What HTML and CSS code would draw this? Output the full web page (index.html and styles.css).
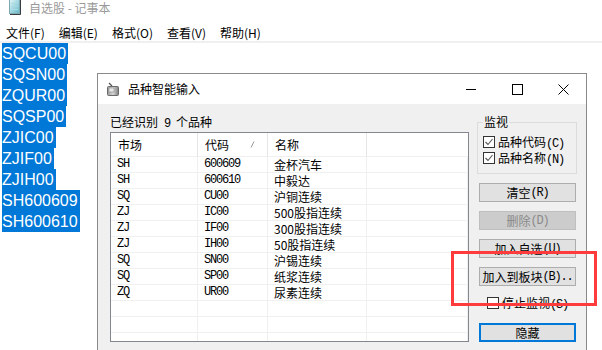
FILE: index.html
```html
<!DOCTYPE html>
<html lang="zh-CN">
<head>
<meta charset="utf-8">
<title>自选股 - 记事本</title>
<link rel="stylesheet" href="styles.css">
</head>
<body>
<div class="notepad">
  <div class="np-title">
    <svg class="np-icon" width="16" height="16" viewBox="0 0 16 16">
      <defs>
        <linearGradient id="nb" x1="0" y1="0" x2="1" y2="1">
          <stop offset="0" stop-color="#e4f6f8"/>
          <stop offset="1" stop-color="#62b7c8"/>
        </linearGradient>
      </defs>
      <rect x="2.5" y="0.5" width="10" height="14" fill="url(#nb)" stroke="#7fa9b4"/>
      <path d="M13.5 1 V15.5 H3" stroke="#3c3c3c" fill="none"/>
      <path d="M4 4.5 H11 M4 7.5 H11 M4 10.5 H11" stroke="#a9dbe4"/>
    </svg>
    <span class="np-caption">自选股 - 记事本</span>
  </div>
  <div class="np-menu">
    <span>文件(F)</span><span>编辑(E)</span><span>格式(O)</span><span>查看(V)</span><span>帮助(H)</span>
  </div>
  <div class="np-text">
    <div class="line"><span>SQCU00</span></div>
    <div class="line"><span>SQSN00</span></div>
    <div class="line"><span>ZQUR00</span></div>
    <div class="line"><span>SQSP00</span></div>
    <div class="line"><span>ZJIC00</span></div>
    <div class="line"><span>ZJIF00</span></div>
    <div class="line"><span>ZJIH00</span></div>
    <div class="line"><span>SH600609</span></div>
    <div class="line"><span>SH600610</span></div>
  </div>
</div>

<div class="dialog">
  <div class="dlg-title">
    <svg class="dlg-icon" width="12" height="14" viewBox="0 0 12 14">
      <defs>
        <linearGradient id="gi" x1="0" y1="0" x2="1" y2="0">
          <stop offset="0" stop-color="#9a9a9a"/>
          <stop offset="0.5" stop-color="#d8d8d8"/>
          <stop offset="1" stop-color="#7c7c7c"/>
        </linearGradient>
      </defs>
      <path d="M2 1 L5 4" stroke="#555" stroke-width="1.2"/>
      <rect x="0.5" y="4.5" width="11" height="9" rx="1" fill="url(#gi)" stroke="#6a6a6a"/>
      <rect x="2" y="6" width="5" height="4" fill="#e8e8e8" stroke="#8a8a8a" stroke-width="0.6"/>
    </svg>
    <span class="dlg-caption">品种智能输入</span>
    <div class="win-ctrls">
      <span class="wc"><svg width="10" height="10" viewBox="0 0 10 10"><path d="M0 5.5 H10" stroke="#000"/></svg></span>
      <span class="wc"><svg width="11" height="11" viewBox="0 0 11 11"><rect x="0.5" y="0.5" width="10" height="10" fill="none" stroke="#000"/></svg></span>
      <span class="wc"><svg width="11" height="11" viewBox="0 0 11 11"><path d="M0.5 0.5 L10.5 10.5 M10.5 0.5 L0.5 10.5" stroke="#000"/></svg></span>
    </div>
  </div>
  <div class="dlg-body">
    <div class="left">
      <div class="count">已经识别<span class="a"> 9 </span>个品种</div>
      <div class="listview">
        <div class="lv-grid">
          <div class="hc">市场</div>
          <div class="hc">代码<svg class="sort" width="5" height="7" viewBox="0 0 5 7"><path d="M1 6.5 L4 0.5" stroke="#9a9a9a"/></svg></div>
          <div class="hc">名称</div>
          <div class="hc hc-last"></div>

          <div class="c a">SH</div><div class="c a">600609</div><div class="c">金杯汽车</div><div class="c"></div>
          <div class="c a">SH</div><div class="c a">600610</div><div class="c">中毅达</div><div class="c"></div>
          <div class="c a">SQ</div><div class="c a">CU00</div><div class="c">沪铜连续</div><div class="c"></div>
          <div class="c a">ZJ</div><div class="c a">IC00</div><div class="c">500股指连续</div><div class="c"></div>
          <div class="c a">ZJ</div><div class="c a">IF00</div><div class="c">300股指连续</div><div class="c"></div>
          <div class="c a">ZJ</div><div class="c a">IH00</div><div class="c">50股指连续</div><div class="c"></div>
          <div class="c a">SQ</div><div class="c a">SN00</div><div class="c">沪锡连续</div><div class="c"></div>
          <div class="c a">SQ</div><div class="c a">SP00</div><div class="c">纸浆连续</div><div class="c"></div>
          <div class="c a">ZQ</div><div class="c a">UR00</div><div class="c">尿素连续</div><div class="c"></div>
          <div class="c"></div><div class="c"></div><div class="c"></div><div class="c"></div>
          <div class="c"></div><div class="c"></div><div class="c"></div><div class="c"></div>
          <div class="c"></div><div class="c"></div><div class="c"></div><div class="c"></div>
        </div>
      </div>
    </div>
    <div class="right">
      <fieldset class="group">
        <legend>监视</legend>
        <div class="chk">
          <svg width="12" height="12" viewBox="0 0 12 12"><rect x="0.5" y="0.5" width="11" height="11" fill="#fff" stroke="#333"/><path d="M2.5 6 L5 8.5 L9.5 3" fill="none" stroke="#555" stroke-width="1.1"/></svg>
          <span>品种代码<span class="a">(C)</span></span>
        </div>
        <div class="chk">
          <svg width="12" height="12" viewBox="0 0 12 12"><rect x="0.5" y="0.5" width="11" height="11" fill="#fff" stroke="#333"/><path d="M2.5 6 L5 8.5 L9.5 3" fill="none" stroke="#555" stroke-width="1.1"/></svg>
          <span>品种名称<span class="a">(N)</span></span>
        </div>
      </fieldset>
      <div class="buttons">
        <div class="btn">清空<span class="a">(R)</span></div>
        <div class="btn btn-disabled">删除<span class="a">(D)</span></div>
        <div class="btn">加入自选<span class="a">(U)</span></div>
        <div class="btn">加入到板块<span class="a">(B)..</span></div>
      </div>
      <div class="chk chk-stop">
        <svg width="12" height="12" viewBox="0 0 12 12"><rect x="0.5" y="0.5" width="11" height="11" fill="#fff" stroke="#333"/></svg>
        <span>停止监视<span class="a">(S)</span></span>
      </div>
      <div class="btn btn-default">隐藏</div>
    </div>
  </div>
</div>

<div class="annot"></div>
</body>
</html>
```

FILE: styles.css
```css
* { box-sizing: border-box; }

html, body {
  margin: 0;
  padding: 0;
}

body {
  width: 602px;
  height: 350px;
  overflow: hidden;
  position: relative;
  background: #ffffff;
  font-family: "Noto Sans CJK SC", "Liberation Sans", sans-serif;
  color: #000;
}

/* ---------- Notepad ---------- */
.notepad {
  height: 350px;
  overflow: hidden;
}

.np-title {
  height: 24px;
  display: flex;
  align-items: flex-start;
  padding-left: 7px;
}

.np-icon {
  margin-top: -1px;
  flex: none;
}

.np-caption {
  margin-left: 6px;
  font-size: 12px;
  line-height: 15px;
  color: #9a9a9a;
}

.np-menu {
  height: 19px;
  display: flex;
  font-size: 12px;
  line-height: 17px;
  border-bottom: 2px solid #f0f0f0;
}

.np-menu span {
  padding: 0 8px 0 6px;
}

.np-text {
  padding-left: 2px;
  font-family: "Liberation Sans", sans-serif;
  font-size: 16px;
  line-height: 21px;
}

.line {
  height: 21px;
}

.line span {
  display: inline-block;
  height: 21px;
  padding-right: 2px;
  background: #0078d7;
  color: #fff;
}

/* ---------- Dialog ---------- */
.dialog {
  position: absolute;
  left: 97px;
  top: 73px;
  width: 490px;
  height: 277px;
  border: 1px solid #8a8a8a;
  border-bottom: none;
  background: #f0f0f0;
  font-size: 12px;
  overflow: hidden;
}

.dlg-title {
  height: 30px;
  background: #fff;
  display: flex;
  align-items: center;
  padding-left: 9px;
}

.dlg-icon {
  flex: none;
}

.dlg-caption {
  margin-left: 9px;
  font-size: 12px;
  line-height: 16px;
}

.win-ctrls {
  margin-left: auto;
  display: flex;
  height: 30px;
}

.wc {
  width: 46px;
  height: 30px;
  display: flex;
  align-items: center;
  justify-content: center;
}

.dlg-body {
  display: flex;
  padding: 10px 0 0 12px;
}

.a {
  font-family: "Liberation Mono", monospace;
  font-size: 12px;
  letter-spacing: -1.2px;
}

.left {
  width: 359px;
  flex: none;
}

.count {
  height: 18px;
  line-height: 16px;
}

.listview {
  width: 359px;
  height: 210px;
  border: 1px solid #828790;
  background: #fff;
  overflow: hidden;
}

.lv-grid {
  display: grid;
  grid-template-columns: 87px 70px 99px 1fr;
  grid-template-rows: 24px;
  grid-auto-rows: 16px;
}

.hc {
  height: 24px;
  padding-left: 7px;
  border-right: 1px solid #e5e5e5;
  border-bottom: 1px solid #f0f0f0;
  display: flex;
  align-items: center;
}

.hc-last {
  border-right: none;
}

.sort {
  margin-left: auto;
  margin-right: 12px;
}

.c {
  height: 16px;
  line-height: 15px;
  padding-left: 6px;
  border-right: 1px solid #f0f0f0;
  border-bottom: 1px solid #f0f0f0;
  white-space: nowrap;
  overflow: hidden;
}

.c.a {
  color: #000;
}

/* ---------- Right column ---------- */
.right {
  margin-left: 8px;
  width: 100px;
  display: flex;
  flex-direction: column;
}

.group {
  margin: 0;
  padding: 0 0 0 5px;
  width: 100px;
  height: 60px;
  border: 1px solid #dcdcdc;
}

.group legend {
  padding: 0 1px;
  line-height: 16px;
}

.chk {
  display: flex;
  align-items: center;
  height: 16px;
  gap: 3px;
  white-space: nowrap;
}

.group .chk:first-of-type {
  margin-top: 4px;
}

.buttons {
  display: flex;
  flex-direction: column;
  gap: 9px;
  margin-top: 9px;
}

.btn {
  margin-left: 2px;
  width: 97px;
  height: 19px;
  background: #e1e1e1;
  border: 1px solid #adadad;
  display: flex;
  align-items: center;
  justify-content: center;
  white-space: nowrap;
  line-height: 16px;
}

.btn-disabled {
  background: #cccccc;
  border-color: #bfbfbf;
  color: #8a8a8a;
}

.chk-stop {
  margin-top: 9px;
  margin-left: 10px;
}

.btn-default {
  margin-top: 12px;
  height: 19px;
  border: 2px solid #0078d7;
}

/* ---------- annotation ---------- */
.annot {
  position: absolute;
  left: 451px;
  top: 251px;
  width: 146px;
  height: 55px;
  border: 3px solid #ff3b3b;
}
```
